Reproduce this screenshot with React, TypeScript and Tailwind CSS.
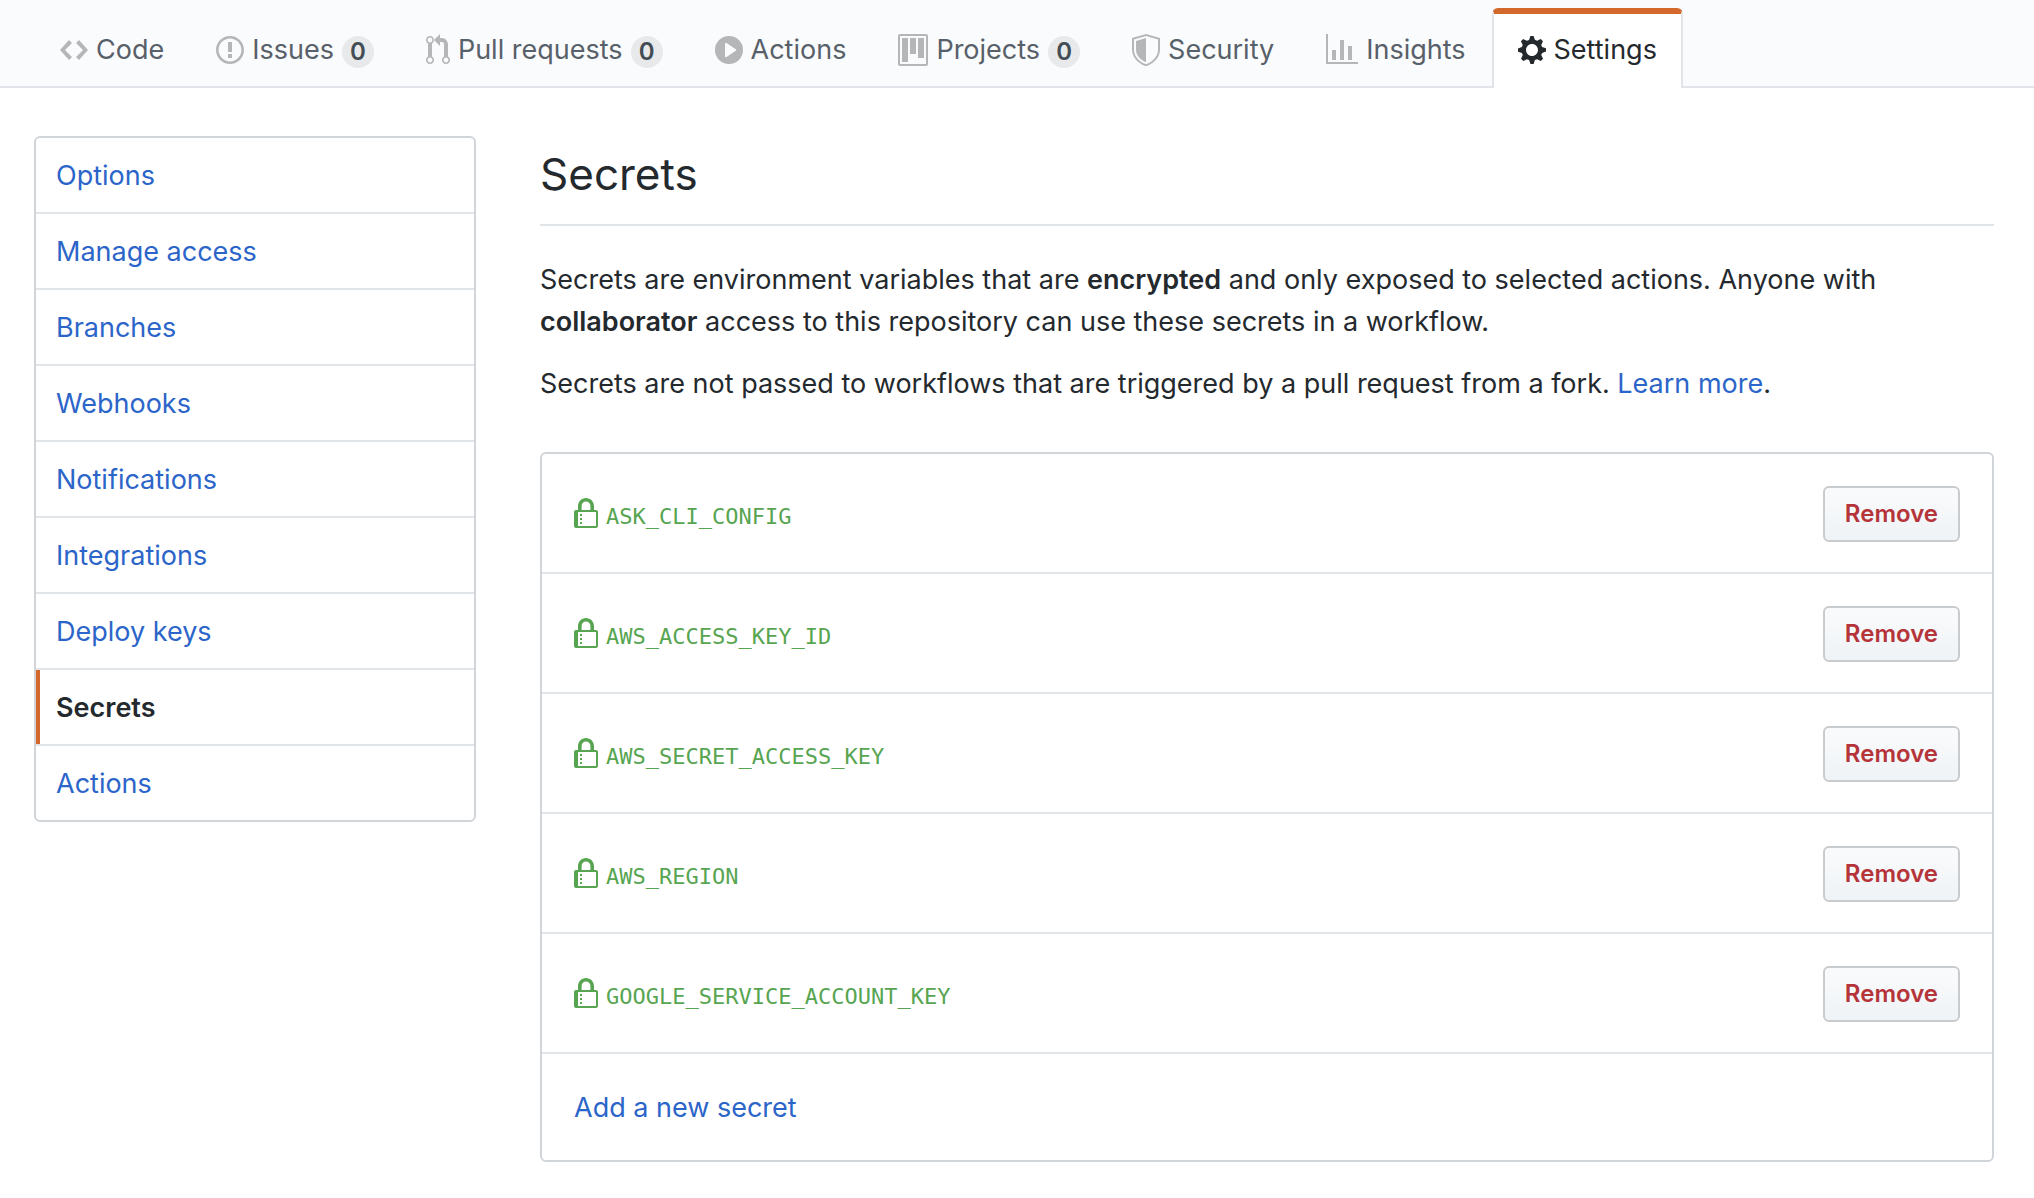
import type { ReactNode } from "react";

type IconProps = { d: string; width: number; evenOdd?: boolean; className?: string };

function Octicon({ d, width, evenOdd, className = "" }: IconProps) {
  return (
    <svg
      aria-hidden="true"
      viewBox={`0 0 ${width} 16`}
      width={width * 2}
      height={32}
      fill="currentColor"
      fillRule={evenOdd ? "evenodd" : "nonzero"}
      className={`shrink-0 ${className}`}
    >
      <path d={d} />
    </svg>
  );
}

const LOCK =
  "M4 13H3v-1h1v1zm8-6v7c0 .55-.45 1-1 1H1c-.55 0-1-.45-1-1V7c0-.55.45-1 1-1h1V4c0-2.2 1.8-4 4-4s4 1.8 4 4v2h1c.55 0 1 .45 1 1zM3.8 6h4.41V4c0-1.22-.98-2.2-2.2-2.2-1.22 0-2.2.98-2.2 2.2v2H3.8zM11 7H2v7h9V7zM4 8H3v1h1V8zm0 2H3v1h1v-1z";

type Tab = { label: string; d: string; width: number; count?: number; active?: boolean };

const tabs: Tab[] = [
  {
    label: "Code",
    width: 14,
    d: "M9.5 3L8 4.5 11.5 8 8 11.5 9.5 13 14 8 9.5 3zm-5 0L0 8l4.5 5L6 11.5 2.5 8 6 4.5 4.5 3z",
  },
  {
    label: "Issues",
    width: 14,
    count: 0,
    d: "M7 2.3c3.14 0 5.7 2.56 5.7 5.7s-2.56 5.7-5.7 5.7A5.71 5.71 0 0 1 1.3 8c0-3.14 2.56-5.7 5.7-5.7zM7 1C3.14 1 0 4.14 0 8s3.14 7 7 7 7-3.14 7-7-3.14-7-7-7zm1 3H6v5h2V4zm0 6H6v2h2v-2z",
  },
  {
    label: "Pull requests",
    width: 12,
    count: 0,
    d: "M11 11.28V5c-.03-.78-.34-1.47-.94-2.06C9.46 2.35 8.78 2.03 8 2H7V0L4 3l3 3V4h1c.27.02.48.11.69.31.21.2.3.42.31.69v6.28A1.993 1.993 0 0 0 10 15a1.993 1.993 0 0 0 1-3.72zm-1 2.92c-.66 0-1.2-.55-1.2-1.2 0-.65.55-1.2 1.2-1.2.65 0 1.2.55 1.2 1.2 0 .65-.55 1.2-1.2 1.2zM4 3c0-1.11-.89-2-2-2a1.993 1.993 0 0 0-1 3.72v6.56A1.993 1.993 0 0 0 2 15a1.993 1.993 0 0 0 1-3.72V4.72c.59-.34 1-.98 1-1.72zm-.8 10c0 .66-.55 1.2-1.2 1.2-.65 0-1.2-.55-1.2-1.2 0-.65.55-1.2 1.2-1.2.65 0 1.2.55 1.2 1.2zM2 4.2C1.34 4.2.8 3.65.8 3c0-.65.55-1.2 1.2-1.2.65 0 1.2.55 1.2 1.2 0 .65-.55 1.2-1.2 1.2z",
  },
  {
    label: "Actions",
    width: 14,
    d: "M14 8A7 7 0 1 1 0 8a7 7 0 0 1 14 0zm-8.223 3.482l4.599-3.066a.5.5 0 0 0 0-.832L5.777 4.518A.5.5 0 0 0 5 4.934v6.132a.5.5 0 0 0 .777.416z",
  },
  {
    label: "Projects",
    width: 15,
    count: 0,
    d: "M10 12h3V2h-3v10zm-4-2h3V2H6v8zm-4 4h3V2H2v12zm-1 1h13V1H1v14zM14 0H1a1 1 0 0 0-1 1v14a1 1 0 0 0 1 1h13a1 1 0 0 0 1-1V1a1 1 0 0 0-1-1z",
  },
  {
    label: "Security",
    width: 14,
    d: "M0 2l7-2 7 2v6.02C14 12.69 8.69 16 7 16c-1.69 0-7-3.31-7-7.98V2zm1 .75L7 1l6 1.75v5.268C13 12.104 8.449 15 7 15c-1.449 0-6-2.896-6-6.982V2.75zm1 .75L7 2v12c-1.207 0-5-2.482-5-5.985V3.5z",
  },
  {
    label: "Insights",
    width: 16,
    d: "M16 14v1H0V0h1v14h15zM5 13H3V8h2v5zm4 0H7V3h2v10zm4 0h-2V6h2v7z",
  },
  {
    label: "Settings",
    width: 14,
    active: true,
    d: "M14 8.77v-1.6l-1.94-.64-.45-1.09.88-1.84-1.13-1.13-1.81.91-1.09-.45-.69-1.92h-1.6l-.63 1.94-1.11.45-1.84-.88-1.13 1.13.91 1.81-.45 1.09L0 7.23v1.59l1.94.64.45 1.09-.88 1.84 1.13 1.13 1.81-.91 1.09.45.69 1.92h1.59l.63-1.94 1.11-.45 1.84.88 1.13-1.13-.92-1.81.47-1.09L14 8.75v.02zM7 11c-1.66 0-3-1.34-3-3s1.34-3 3-3 3 1.34 3 3-1.34 3-3 3z",
  },
];

const menu = [
  "Options",
  "Manage access",
  "Branches",
  "Webhooks",
  "Notifications",
  "Integrations",
  "Deploy keys",
  "Secrets",
  "Actions",
];

const secrets = [
  "ASK_CLI_CONFIG",
  "AWS_ACCESS_KEY_ID",
  "AWS_SECRET_ACCESS_KEY",
  "AWS_REGION",
  "GOOGLE_SERVICE_ACCOUNT_KEY",
];

function RepoTab({ tab }: { tab: Tab }) {
  return (
    <a
      href="#"
      aria-current={tab.active ? "page" : undefined}
      className={
        tab.active
          ? "-mb-0.5 flex items-center rounded-t-md border-x-2 border-t-6 border-x-[#e1e4e8] border-t-[#d2682b] bg-white px-6 pb-0.5 text-[#24292e]"
          : "flex items-center border-x-2 border-t-6 border-transparent px-6 text-[#586069]"
      }
    >
      <Octicon
        d={tab.d}
        width={tab.width}
        evenOdd={tab.label === "Security" || tab.label === "Projects"}
        className={tab.active ? "mr-2" : "mr-2 text-[#b4b6b8]"}
      />
      <span className="whitespace-nowrap">{tab.label}</span>
      {tab.count !== undefined && (
        <span className="mt-1 ml-2 flex h-8 min-w-8 items-center justify-center rounded-full bg-[#e8e9eb] text-2xl leading-8 font-semibold text-[#444d56]">
          {tab.count}
        </span>
      )}
    </a>
  );
}

function Link({ children }: { children: ReactNode }) {
  return (
    <a href="#" className="text-[#2c65c9] hover:underline">
      {children}
    </a>
  );
}

export default function App() {
  return (
    <div className="min-h-screen bg-white font-['Inter',sans-serif] text-[27px] leading-[42px] text-[#24292e]">
      <header className="border-b-2 border-[#e1e4e8] bg-[#fafbfc] pt-2">
        <nav aria-label="Repository" className="flex h-[78px] items-stretch pl-[34px]">
          {tabs.map((tab) => (
            <RepoTab key={tab.label} tab={tab} />
          ))}
        </nav>
      </header>

      <div className="flex items-start gap-16 pt-12 pr-10 pb-9 pl-[34px]">
        <nav
          aria-label="Settings"
          className="w-[442px] shrink-0 divide-y-2 divide-[#e1e4e8] overflow-hidden rounded-md border-2 border-[#d1d5da]"
        >
          {menu.map((item) => (
            <a
              key={item}
              href="#"
              aria-current={item === "Secrets" ? "page" : undefined}
              className={
                item === "Secrets"
                  ? "block px-5 pt-[17px] pb-[15px] font-semibold shadow-[inset_4px_0_0_#d2682b]"
                  : "block px-5 pt-[17px] pb-[15px] text-[#2c65c9]"
              }
            >
              {item}
            </a>
          ))}
        </nav>

        <main className="min-w-0 flex-1">
          <h1 className="border-b-2 border-[#e1e4e8] pt-0.5 pb-3.5 text-[44px] leading-[72px]">Secrets</h1>
          <p className="mt-[33px]">
            Secrets are environment variables that are <strong className="font-semibold">encrypted</strong> and
            only exposed to selected actions. Anyone with <strong className="font-semibold">collaborator</strong>{" "}
            access to this repository can use these secrets in a workflow.
          </p>
          <p className="mt-5">
            Secrets are not passed to workflows that are triggered by a pull request from a fork.{" "}
            <Link>Learn more</Link>.
          </p>

          <ul className="mt-[47px] divide-y-2 divide-[#e1e4e8] rounded-md border-2 border-[#d1d5da]">
            {secrets.map((name) => (
              <li key={name} className="flex items-center justify-between px-8 pt-8 pb-[30px]">
                <span className="flex items-center gap-2 text-[#57a551]">
                  <Octicon d={LOCK} width={12} />
                  <code className="pt-1.5 font-['DejaVu_Sans_Mono',monospace] text-[22px] leading-7">{name}</code>
                </span>
                <button
                  type="button"
                  aria-label={`Remove ${name}`}
                  className="h-14 rounded-md border-2 border-[#c9cccf] bg-linear-to-b from-[#fafbfc] to-[#eff3f6] px-5 text-2xl leading-9 font-semibold text-[#b5343a]"
                >
                  Remove
                </button>
              </li>
            ))}
            <li className="px-8 pt-[33px] pb-[31px]">
              <Link>Add a new secret</Link>
            </li>
          </ul>
        </main>
      </div>
    </div>
  );
}
